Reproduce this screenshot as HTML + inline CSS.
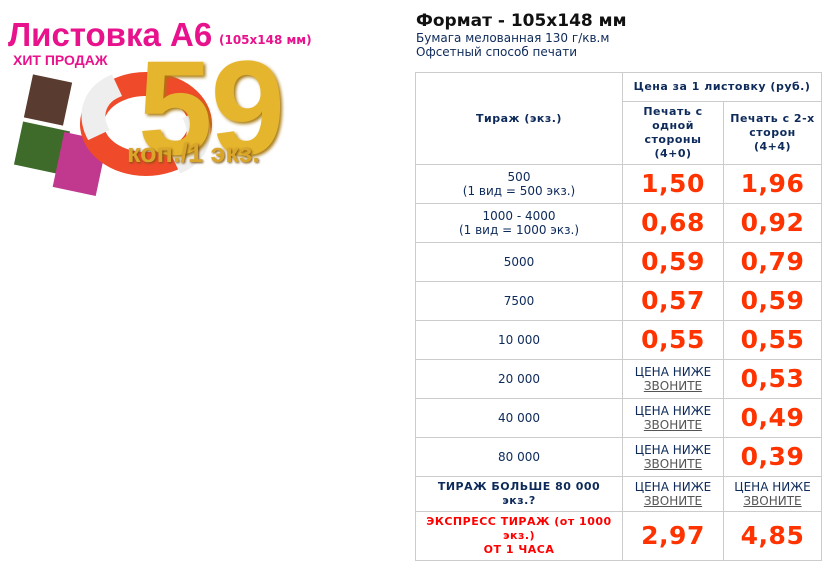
<!DOCTYPE html>
<html><head><meta charset="utf-8"><style>
*{margin:0;padding:0;box-sizing:border-box}
body{width:828px;height:579px;background:#fff;position:relative;overflow:hidden;font-family:"DejaVu Sans","Liberation Sans",sans-serif;color:#0d2a5a}
.a{position:absolute}
.c{position:absolute;border-right:1px solid #ccc;border-bottom:1px solid #ccc;display:flex;align-items:center;justify-content:center;text-align:center;font-size:12px;line-height:14px}
.c>div{width:100%}
.big{color:#ff3300;font-weight:bold;font-size:25px;letter-spacing:0.5px}
.low{font-size:12px;line-height:14px;color:#0d2a5a}
.low u{color:#555}
.h{font-weight:bold;font-size:11px;line-height:14px;letter-spacing:0.5px}
</style></head><body>
<!-- left banner -->
<div class="a" style="left:8px;top:16px;font:bold 33px 'Liberation Sans',sans-serif;color:#e8128c">Листовка А6</div>
<div class="a" style="left:219px;top:33px;font:bold 12px 'DejaVu Sans',sans-serif;color:#e8128c">(105x148 мм)</div>
<div class="a" style="left:13px;top:52px;font:bold 14px 'Liberation Sans',sans-serif;color:#e8128c">ХИТ ПРОДАЖ</div>
<div class="a" style="left:28px;top:78px;width:40px;height:44px;background:#5a3b30;transform:rotate(12deg)"></div>
<div class="a" style="left:18px;top:126px;width:48px;height:44px;background:#3f6b2a;transform:rotate(12deg)"></div>
<div class="a" style="left:58px;top:136px;width:44px;height:56px;background:#c0398f;transform:rotate(12deg)"></div>
<div class="a" style="left:80px;top:72px;width:132px;height:104px;border-radius:50%;border:24px solid #ef4a2a"></div>
<div class="a" style="left:80px;top:72px;width:132px;height:104px;border-radius:50%;border:24px solid #eeeeee;border-top-color:transparent;border-bottom-color:transparent;transform:rotate(20deg)"></div>
<div class="a" style="left:138px;top:42px;font:bold 134px/1 'Liberation Sans',sans-serif;color:#e5b52e;letter-spacing:-2px;text-shadow:2px 2px 3px #a87a10">59</div>
<div class="a" style="left:127px;top:138px;font:bold 27px 'Liberation Sans',sans-serif;color:#d9a52a;text-shadow:1px 1px 2px #7a5010">коп./1 экз.</div>
<!-- right header -->
<div class="a" style="left:416px;top:11px;font-weight:bold;font-size:17px;color:#111">Формат - 105x148 мм</div>
<div class="a" style="left:416px;top:31px;font-size:12px;color:#0d2a5a">Бумага мелованная 130 г/кв.м</div>
<div class="a" style="left:416px;top:45px;font-size:12px;color:#0d2a5a">Офсетный способ печати</div>
<!-- table -->
<div class="a" style="left:415px;top:72px;width:407px;height:489px;border-top:1px solid #ccc;border-left:1px solid #ccc"></div>
<div class="c h" style="left:416px;top:73px;width:207px;height:92px"><div>Тираж (экз.)</div></div>
<div class="c h" style="left:623px;top:73px;width:199px;height:29px"><div>Цена за 1 листовку (руб.)</div></div>
<div class="c h" style="left:623px;top:102px;width:101px;height:63px"><div>Печать с<br>одной<br>стороны<br>(4+0)</div></div>
<div class="c h" style="left:724px;top:102px;width:98px;height:63px"><div>Печать с 2-х<br>сторон<br>(4+4)</div></div>

<div class="c" style="left:416px;top:165px;width:207px;height:39px"><div>500<br>(1 вид = 500 экз.)</div></div>
<div class="c big" style="left:623px;top:165px;width:101px;height:39px">1,50</div>
<div class="c big" style="left:724px;top:165px;width:98px;height:39px">1,96</div>

<div class="c" style="left:416px;top:204px;width:207px;height:39px"><div>1000 - 4000<br>(1 вид = 1000 экз.)</div></div>
<div class="c big" style="left:623px;top:204px;width:101px;height:39px">0,68</div>
<div class="c big" style="left:724px;top:204px;width:98px;height:39px">0,92</div>

<div class="c" style="left:416px;top:243px;width:207px;height:39px">5000</div>
<div class="c big" style="left:623px;top:243px;width:101px;height:39px">0,59</div>
<div class="c big" style="left:724px;top:243px;width:98px;height:39px">0,79</div>

<div class="c" style="left:416px;top:282px;width:207px;height:39px">7500</div>
<div class="c big" style="left:623px;top:282px;width:101px;height:39px">0,57</div>
<div class="c big" style="left:724px;top:282px;width:98px;height:39px">0,59</div>

<div class="c" style="left:416px;top:321px;width:207px;height:39px">10 000</div>
<div class="c big" style="left:623px;top:321px;width:101px;height:39px">0,55</div>
<div class="c big" style="left:724px;top:321px;width:98px;height:39px">0,55</div>

<div class="c" style="left:416px;top:360px;width:207px;height:39px">20 000</div>
<div class="c low" style="left:623px;top:360px;width:101px;height:39px"><div>ЦЕНА НИЖЕ<br><u>ЗВОНИТЕ</u></div></div>
<div class="c big" style="left:724px;top:360px;width:98px;height:39px">0,53</div>

<div class="c" style="left:416px;top:399px;width:207px;height:39px">40 000</div>
<div class="c low" style="left:623px;top:399px;width:101px;height:39px"><div>ЦЕНА НИЖЕ<br><u>ЗВОНИТЕ</u></div></div>
<div class="c big" style="left:724px;top:399px;width:98px;height:39px">0,49</div>

<div class="c" style="left:416px;top:438px;width:207px;height:39px">80 000</div>
<div class="c low" style="left:623px;top:438px;width:101px;height:39px"><div>ЦЕНА НИЖЕ<br><u>ЗВОНИТЕ</u></div></div>
<div class="c big" style="left:724px;top:438px;width:98px;height:39px">0,39</div>

<div class="c h" style="left:416px;top:477px;width:207px;height:35px"><div>ТИРАЖ БОЛЬШЕ 80 000<br>экз.?</div></div>
<div class="c low" style="left:623px;top:477px;width:101px;height:35px"><div>ЦЕНА НИЖЕ<br><u>ЗВОНИТЕ</u></div></div>
<div class="c low" style="left:724px;top:477px;width:98px;height:35px"><div>ЦЕНА НИЖЕ<br><u>ЗВОНИТЕ</u></div></div>

<div class="c h" style="left:416px;top:512px;width:207px;height:49px;color:#ff0000"><div>ЭКСПРЕСС ТИРАЖ (от 1000<br>экз.)<br>ОТ 1 ЧАСА</div></div>
<div class="c big" style="left:623px;top:512px;width:101px;height:49px">2,97</div>
<div class="c big" style="left:724px;top:512px;width:98px;height:49px">4,85</div>
</body></html>
